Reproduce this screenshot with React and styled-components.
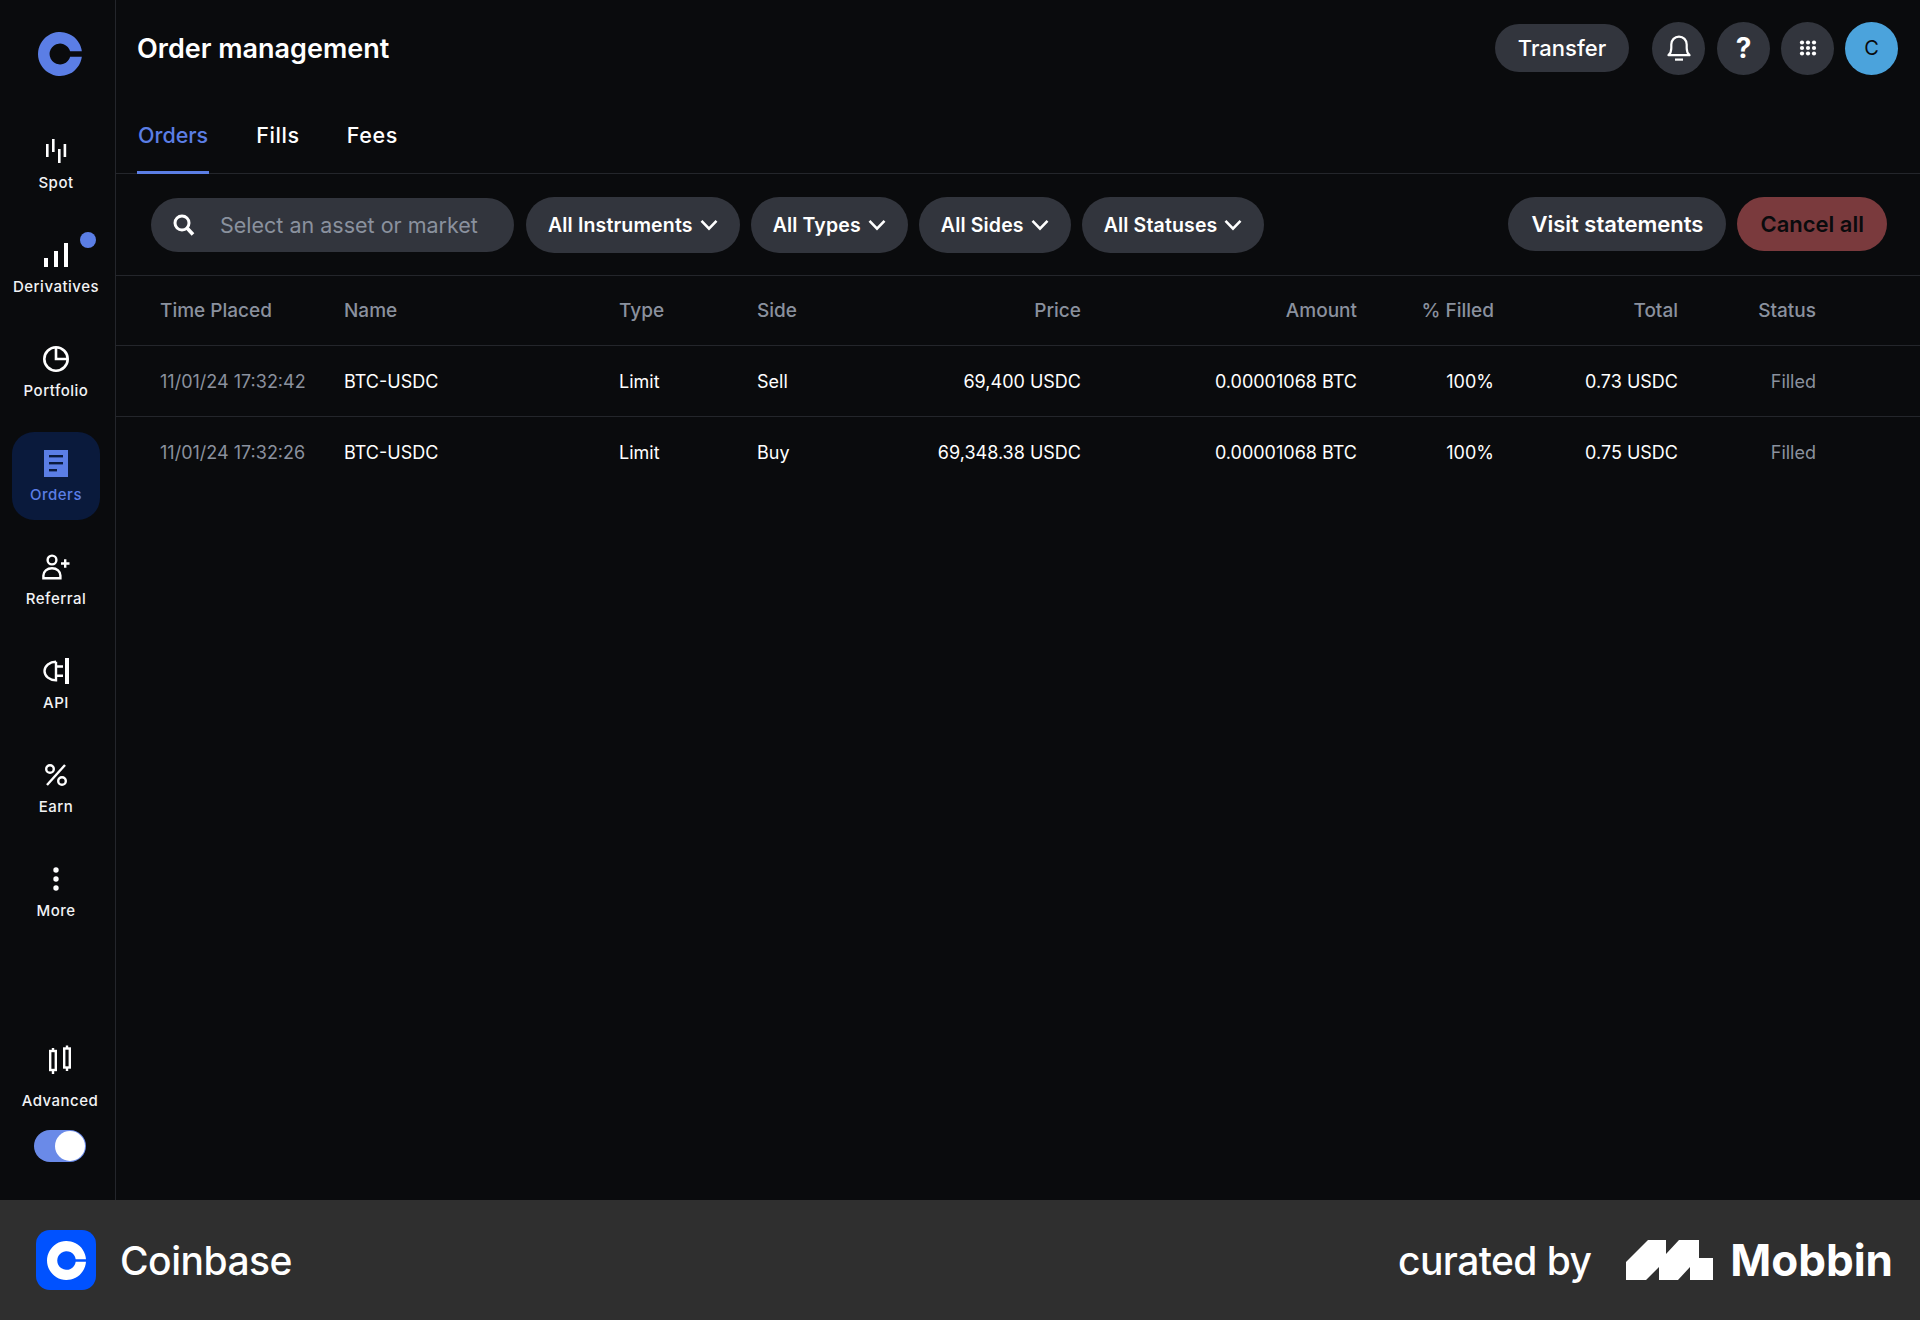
import React from "react";
import styled, { createGlobalStyle } from "styled-components";

const GlobalStyle = createGlobalStyle`
  html, body {
    margin: 0;
    padding: 0;
    background: #0a0b0d;
    font-family: Inter, "Liberation Sans", sans-serif;
  }
`;

const columns = [
  { label: "Time Placed", key: "time" },
  { label: "Name", key: "name" },
  { label: "Type", key: "type" },
  { label: "Side", key: "side" },
  { label: "Price", key: "price", end: true },
  { label: "Amount", key: "amount", end: true },
  { label: "% Filled", key: "filled", end: true },
  { label: "Total", key: "total", end: true },
  { label: "Status", key: "status", end: true },
];

const orders = [
  {
    time: "11/01/24 17:32:42",
    name: "BTC-USDC",
    type: "Limit",
    side: "Sell",
    price: "69,400 USDC",
    amount: "0.00001068 BTC",
    filled: "100%",
    total: "0.73 USDC",
    status: "Filled",
  },
  {
    time: "11/01/24 17:32:26",
    name: "BTC-USDC",
    type: "Limit",
    side: "Buy",
    price: "69,348.38 USDC",
    amount: "0.00001068 BTC",
    filled: "100%",
    total: "0.75 USDC",
    status: "Filled",
  },
];

const CoinbaseMark = ({ size, color, slot }) => {
  const outer = Math.sqrt(400 - slot * slot);
  const inner = Math.sqrt(90.25 - slot * slot);
  const top = 20 - slot;
  const bottom = 20 + slot;
  return (
    <svg width={size} height={size} viewBox="0 0 40 40">
      <path
        fill={color}
        d={`M${20 + outer} ${top}A20 20 0 1 0 ${20 + outer} ${bottom}H${20 + inner}A9.5 9.5 0 1 1 ${20 + inner} ${top}Z`}
      />
    </svg>
  );
};

const SpotIcon = () => (
  <svg width="24" height="26" viewBox="0 0 24 26" fill="#fff">
    <rect x="2" y="6" width="2.6" height="13" />
    <rect x="8" y="1" width="2.6" height="13" />
    <rect x="14" y="11" width="2.6" height="14" />
    <rect x="19.6" y="6" width="2.6" height="13" />
  </svg>
);

const DerivativesIcon = () => (
  <svg width="26" height="26" viewBox="0 0 26 26" fill="#fff">
    <rect x="1" y="16" width="4" height="9" />
    <rect x="11" y="9" width="4" height="16" />
    <rect x="21" y="1" width="4" height="24" />
  </svg>
);

const PortfolioIcon = () => (
  <svg width="28" height="28" viewBox="0 0 28 28" fill="none" stroke="#fff" strokeWidth="2.6">
    <circle cx="14" cy="14" r="11.7" />
    <path d="M14 2.5V14H25.5" />
  </svg>
);

const OrdersIcon = () => (
  <svg width="24" height="27" viewBox="0 0 24 27">
    <rect width="24" height="27" fill="#5b7ee5" />
    <rect x="5" y="5" width="14" height="2.4" fill="#0a1a3c" />
    <rect x="5" y="12" width="14" height="2.4" fill="#0a1a3c" />
    <rect x="5" y="19" width="8" height="2.4" fill="#0a1a3c" />
  </svg>
);

const ReferralIcon = () => (
  <svg width="28" height="26" viewBox="0 0 28 26" fill="none" stroke="#fff" strokeWidth="2.4">
    <circle cx="10" cy="6" r="4.4" />
    <path d="M1.4 24.2V21.5C1.4 17.5 5 14.2 10 14.2S18.4 17.5 18.4 21.5V24.2Z" />
    <path d="M19 9.5H27.5M23.2 5.2V13.8" />
  </svg>
);

const ApiIcon = () => (
  <svg width="27" height="28" viewBox="0 0 27 28" fill="none" stroke="#fff" strokeWidth="2.4">
    <path d="M13 4.8A11.5 9.3 0 0 0 13 23.4V4.8" />
    <path d="M13 9.5H20M13 18.7H20" />
    <path d="M24 1V27" strokeWidth="4" />
  </svg>
);

const EarnIcon = () => (
  <svg width="24" height="24" viewBox="0 0 24 24" fill="none" stroke="#fff" strokeWidth="2.4">
    <circle cx="6" cy="6" r="3.8" />
    <circle cx="18" cy="18" r="3.8" />
    <path d="M21 2L3 22" />
  </svg>
);

const MoreIcon = () => (
  <svg width="8" height="26" viewBox="0 0 8 26" fill="#fff">
    <circle cx="4" cy="4" r="2.7" />
    <circle cx="4" cy="13" r="2.7" />
    <circle cx="4" cy="22" r="2.7" />
  </svg>
);

const AdvancedIcon = () => (
  <svg width="22" height="30" viewBox="0 0 22 30" fill="none" stroke="#fff" strokeWidth="2.4">
    <rect x="1.2" y="6" width="5.6" height="19" />
    <path d="M4 3V6M4 25V29" />
    <rect x="15.2" y="3.5" width="5.6" height="19" />
    <path d="M18 0.5V3.5M18 22.5V26" />
  </svg>
);

const BellIcon = () => (
  <svg width="24" height="26" viewBox="0 0 24 26" fill="none" stroke="#fff" strokeWidth="2.2">
    <path d="M1.5 20.2C3.6 18.4 4.3 16.4 4.3 13V9.6C4.3 5 7.6 1.6 12 1.6S19.7 5 19.7 9.6V13C19.7 16.4 20.4 18.4 22.5 20.2Z" strokeLinejoin="round" />
    <path d="M8 24.6H16" />
  </svg>
);

const GridIcon = () => (
  <svg width="18" height="16" viewBox="0 0 18 16" fill="#fff">
    {[2.5, 8, 13.5].map((y) =>
      [3, 9, 15].map((x) => <circle key={`${x}-${y}`} cx={x} cy={y} r="2.1" />)
    )}
  </svg>
);

const SearchIcon = () => (
  <svg width="22" height="22" viewBox="0 0 22 22" fill="none" stroke="#fff">
    <circle cx="9" cy="9" r="7" strokeWidth="3" />
    <path d="M14 14L20 20.5" strokeWidth="3.6" />
  </svg>
);

const ChevronIcon = () => (
  <svg width="18" height="12" viewBox="0 0 18 12" fill="none" stroke="#fff" strokeWidth="2.6">
    <path d="M1.5 1.8L9 9.6L16.5 1.8" />
  </svg>
);

const MobbinIcon = () => (
  <svg width="87" height="40" viewBox="0 0 87 40" fill="#fff">
    <path d="M0 40V22L22 0H40V14L53 0H73V18H87V40H64V27L52 40H33V27L20 40Z" />
  </svg>
);

const navItems = [
  { label: "Spot", icon: <SpotIcon /> },
  { label: "Derivatives", icon: <DerivativesIcon />, dot: true },
  { label: "Portfolio", icon: <PortfolioIcon /> },
  { label: "Orders", icon: <OrdersIcon />, active: true },
  { label: "Referral", icon: <ReferralIcon /> },
  { label: "API", icon: <ApiIcon /> },
  { label: "Earn", icon: <EarnIcon /> },
  { label: "More", icon: <MoreIcon /> },
];

const filters = ["All Instruments", "All Types", "All Sides", "All Statuses"];
const tabs = ["Orders", "Fills", "Fees"];

function App() {
  return (
    <Page>
      <GlobalStyle />
      <Workspace>
        <Sidebar>
          <LogoWrap>
            <CoinbaseMark size={44} color="#5b7ee5" slot={2.4} />
          </LogoWrap>
          <Nav>
            {navItems.map(({ label, icon, dot, active }) => (
              <NavItem key={label} $active={active}>
                <NavIcon>{icon}</NavIcon>
                <NavLabel $active={active}>{label}</NavLabel>
                {dot && <NavDot />}
              </NavItem>
            ))}
          </Nav>
          <AdvancedBlock>
            <AdvancedIcon />
            <NavLabel>Advanced</NavLabel>
            <Toggle>
              <ToggleKnob />
            </Toggle>
          </AdvancedBlock>
        </Sidebar>

        <Main>
          <Header>
            <Title>Order management</Title>
            <HeaderActions>
              <TransferButton>Transfer</TransferButton>
              <BellButton>
                <BellIcon />
              </BellButton>
              <RoundButton>
                <QuestionMark>?</QuestionMark>
              </RoundButton>
              <RoundButton>
                <GridIcon />
              </RoundButton>
              <Avatar>C</Avatar>
            </HeaderActions>
          </Header>

          <Tabs>
            {tabs.map((tab, i) => (
              <Tab key={tab} $active={i === 0}>
                {tab}
              </Tab>
            ))}
          </Tabs>

          <Toolbar>
            <Search>
              <SearchIcon />
              <SearchText>Select an asset or market</SearchText>
            </Search>
            {filters.map((filter) => (
              <FilterPill key={filter}>
                {filter}
                <ChevronIcon />
              </FilterPill>
            ))}
            <ToolbarEnd>
              <ActionButton>Visit statements</ActionButton>
              <ActionButton $danger>Cancel all</ActionButton>
            </ToolbarEnd>
          </Toolbar>

          <HeadRow>
            {columns.map(({ label, end }) => (
              <HeadCell key={label} $end={end}>
                {label}
              </HeadCell>
            ))}
          </HeadRow>
          {orders.map((order, i) => (
            <Row key={order.time} $last={i === orders.length - 1}>
              {columns.map(({ key, end }) => (
                <Cell
                  key={key}
                  $end={end}
                  $muted={key === "time" || key === "status"}
                >
                  {order[key]}
                </Cell>
              ))}
            </Row>
          ))}
        </Main>
      </Workspace>

      <Footer>
        <Brand>
          <BrandLogo>
            <CoinbaseMark size={39} color="#fff" slot={1.2} />
          </BrandLogo>
          <BrandName>Coinbase</BrandName>
        </Brand>
        <Curated>
          <CuratedText>curated by</CuratedText>
          <MobbinIcon />
          <MobbinName>Mobbin</MobbinName>
        </Curated>
      </Footer>
    </Page>
  );
}

export default App;

const Page = styled.div`
  width: 1920px;
  height: 1320px;
  display: flex;
  flex-direction: column;
  background: #0a0b0d;
  color: #fff;
  overflow: hidden;
`;

const Workspace = styled.div`
  display: flex;
  height: 1200px;
`;

const Sidebar = styled.aside`
  width: 115px;
  flex-shrink: 0;
  display: flex;
  flex-direction: column;
  border-right: 1px solid #24262b;
`;

const LogoWrap = styled.div`
  height: 44px;
  margin-top: 32px;
  padding-left: 38px;
`;

const Nav = styled.nav`
  display: flex;
  flex-direction: column;
  gap: 16px;
  margin-top: 44px;
  padding: 0 12px;
`;

const NavItem = styled.div`
  position: relative;
  width: 88px;
  height: 88px;
  display: flex;
  flex-direction: column;
  align-items: center;
  border-radius: 22px;
  background: ${(p) => (p.$active ? "#0a1a3c" : "transparent")};
`;

const NavIcon = styled.div`
  height: 30px;
  margin-top: 16px;
  display: flex;
  align-items: center;
  justify-content: center;
`;

const NavLabel = styled.span`
  margin-top: 8px;
  font-size: 15px;
  line-height: 18px;
  font-weight: 500;
  letter-spacing: 0.5px;
  color: ${(p) => (p.$active ? "#5b7ee5" : "#f2f3f5")};
  white-space: nowrap;
`;

const NavDot = styled.span`
  position: absolute;
  top: 8px;
  right: 4px;
  width: 16px;
  height: 16px;
  border-radius: 50%;
  background: #5b7ee5;
`;

const AdvancedBlock = styled.div`
  margin-top: auto;
  margin-bottom: 38px;
  width: 120px;
  display: flex;
  flex-direction: column;
  align-items: center;

  ${NavLabel} {
    margin-top: 17px;
  }
`;

const Toggle = styled.div`
  width: 52px;
  height: 32px;
  margin-top: 20px;
  display: flex;
  align-items: center;
  justify-content: flex-end;
  border-radius: 16px;
  background: #6a8ae8;
`;

const ToggleKnob = styled.div`
  width: 30px;
  height: 30px;
  margin-right: 1px;
  border-radius: 50%;
  background: #fff;
`;

const Main = styled.main`
  flex: 1;
  min-width: 0;
  display: flex;
  flex-direction: column;
`;

const Header = styled.header`
  height: 96px;
  flex-shrink: 0;
  display: flex;
  align-items: center;
  justify-content: space-between;
  padding: 0 22px 0 21px;
`;

const Title = styled.h1`
  margin: 0;
  font-size: 27px;
  font-weight: 600;
`;

const HeaderActions = styled.div`
  display: flex;
  align-items: center;
  gap: 11px;
`;

const TransferButton = styled.div`
  width: 134px;
  height: 48px;
  margin-right: 12px;
  display: flex;
  align-items: center;
  justify-content: center;
  border-radius: 24px;
  background: #32353d;
  font-size: 22px;
  font-weight: 500;
`;

const RoundButton = styled.div`
  width: 53px;
  height: 53px;
  display: flex;
  align-items: center;
  justify-content: center;
  border-radius: 50%;
  background: #32353d;
`;

const BellButton = styled(RoundButton)`
  margin-right: 1px;
`;

const QuestionMark = styled.span`
  font-size: 28px;
  font-weight: 700;
`;

const Avatar = styled(RoundButton)`
  background: #4ba3dc;
  color: #0a0b0d;
  font-size: 20px;
`;

const Tabs = styled.div`
  height: 78px;
  flex-shrink: 0;
  display: flex;
  gap: 47px;
  padding-left: 21px;
  border-bottom: 1px solid #24262b;
  box-sizing: border-box;
`;

const Tab = styled.div`
  height: 78px;
  padding: 2px ${(p) => (p.$active ? "1px" : "0")} 0;
  display: flex;
  align-items: center;
  box-sizing: border-box;
  font-size: 21.5px;
  font-weight: 500;
  letter-spacing: ${(p) => (p.$active ? "0" : "0.6px")};
  color: ${(p) => (p.$active ? "#5b7ee5" : "#fff")};
  border-bottom: 3px solid ${(p) => (p.$active ? "#5b7ee5" : "transparent")};
`;

const Toolbar = styled.div`
  height: 102px;
  flex-shrink: 0;
  display: flex;
  align-items: center;
  gap: 11px;
  padding: 0 33px 0 35px;
  border-bottom: 1px solid #24262b;
  box-sizing: border-box;
`;

const Search = styled.div`
  width: 363px;
  height: 54px;
  display: flex;
  align-items: center;
  gap: 25px;
  padding-left: 22px;
  box-sizing: border-box;
  border-radius: 27px;
  background: #32353d;
  margin-right: 1px;
`;

const SearchText = styled.span`
  font-size: 21.5px;
  color: #8a919e;
`;

const FilterPill = styled.div`
  height: 56px;
  display: flex;
  align-items: center;
  gap: 7px;
  padding: 0 22px;
  border-radius: 28px;
  background: #32353d;
  font-size: 19.5px;
  font-weight: 600;
  letter-spacing: 0.15px;
  white-space: nowrap;
`;

const ToolbarEnd = styled.div`
  margin-left: auto;
  margin-bottom: 2px;
  display: flex;
  gap: 11px;
`;

const ActionButton = styled.div`
  height: 54px;
  display: flex;
  align-items: center;
  padding: 0 23px;
  border-radius: 27px;
  font-size: 22px;
  font-weight: 600;
  background: ${(p) => (p.$danger ? "#7a3a3d" : "#32353d")};
  color: ${(p) => (p.$danger ? "#0a0b0d" : "#fff")};
`;

const HeadRow = styled.div`
  height: 70px;
  flex-shrink: 0;
  display: grid;
  grid-template-columns: 184px 275px 138px 138px 186px 276px 137px 184px 138px;
  align-items: center;
  padding-left: 44px;
  border-bottom: 1px solid #24262b;
  box-sizing: border-box;
`;

const HeadCell = styled.div`
  font-size: 19px;
  font-weight: 500;
  color: #8a919e;
  text-align: ${(p) => (p.$end ? "right" : "left")};
  white-space: nowrap;
`;

const Row = styled(HeadRow)`
  height: 71px;
  border-bottom: ${(p) => (p.$last ? "none" : "1px solid #24262b")};
`;

const Cell = styled.div`
  font-size: 18px;
  color: ${(p) => (p.$muted ? "#8a919e" : "#fff")};
  text-align: ${(p) => (p.$end ? "right" : "left")};
  white-space: nowrap;
`;

const Footer = styled.footer`
  height: 120px;
  flex-shrink: 0;
  display: flex;
  align-items: center;
  justify-content: space-between;
  padding: 0 27px 0 36px;
  background: #2f2f2f;
`;

const Brand = styled.div`
  display: flex;
  align-items: center;
  gap: 24px;
`;

const BrandLogo = styled.div`
  width: 60px;
  height: 60px;
  display: flex;
  align-items: center;
  justify-content: center;
  border-radius: 14px;
  background: #0052ff;
`;

const BrandName = styled.span`
  font-size: 39px;
  font-weight: 500;
  letter-spacing: -0.5px;
`;

const Curated = styled.div`
  display: flex;
  align-items: center;
`;

const CuratedText = styled.span`
  font-size: 39px;
  font-weight: 500;
  letter-spacing: -0.6px;
  margin-right: 35px;
`;

const MobbinName = styled.span`
  font-size: 44px;
  font-weight: 700;
  margin-left: 17px;
`;
